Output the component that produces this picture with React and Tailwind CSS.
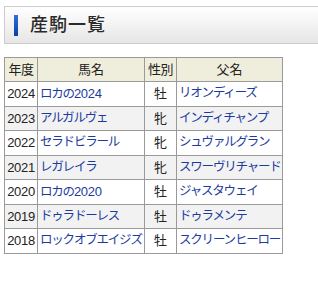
import React from 'react';

const rows = [
  ['2024', 'ロカの2024', '牡', 'リオンディーズ'],
  ['2023', 'アルガルヴェ', '牝', 'インディチャンプ'],
  ['2022', 'セラドビラール', '牝', 'シュヴァルグラン'],
  ['2021', 'レガレイラ', '牝', 'スワーヴリチャード'],
  ['2020', 'ロカの2020', '牡', 'ジャスタウェイ'],
  ['2019', 'ドゥラドーレス', '牡', 'ドゥラメンテ'],
  ['2018', 'ロックオブエイジズ', '牡', 'スクリーンヒーロー'],
];

// kana get tight spacing, digits keep normal spacing
const Name = ({ text }) => {
  const parts = text.split(/(\d+)/).filter(Boolean);
  return parts.map((p, i) =>
    /\d/.test(p)
      ? <span key={i} className="text-[13px] tracking-[-0.3px]">{p}</span>
      : <span key={i}>{p}</span>
  );
};

const App = () => {
  return (
    <div className="w-[318px] h-[281px] bg-white overflow-hidden pt-[6px] pl-[4px] font-['Liberation_Sans','Noto_Sans_CJK_JP',sans-serif]">
      <div className="w-[330px] h-[38px] border border-[#cccccc] bg-gradient-to-b from-white to-[#e6e6e6] flex items-center pl-[9px]">
        <span className="w-[4px] h-[21px] bg-gradient-to-b from-[#2f6fe0] to-[#0a3fa8]" />
        <h2 className="ml-[12px] text-[18px] font-medium text-[#2a2a2a] leading-none tracking-[1px]">産駒一覧</h2>
      </div>

      <table className="mt-[13px] w-[279px] table-fixed border-collapse text-[13px] text-[#222222]">
        <thead>
          <tr className="bg-[#efeddb] h-[24px]">
            <th className="w-[33px] border border-[#9a9a9a] font-normal px-0 tracking-[-0.5px]">年度</th>
            <th className="w-[107px] border border-[#9a9a9a] font-normal">馬名</th>
            <th className="w-[32px] border border-[#9a9a9a] font-normal tracking-[-0.5px]">性別</th>
            <th className="w-[106px] border border-[#9a9a9a] font-normal">父名</th>
          </tr>
        </thead>
        <tbody>
          {rows.map((r, i) => (
            <tr key={r[0]} className={`h-[24.5px] ${i % 2 === 1 ? 'bg-[#f2f2f2]' : 'bg-white'}`}>
              <td className="border border-[#9a9a9a] text-center px-0 tracking-[-0.3px]">{r[0]}</td>
              <td className="border border-[#9a9a9a] pl-[2px] text-[12.5px] tracking-[-1.2px] text-[#1c3b9e] whitespace-nowrap overflow-hidden"><Name text={r[1]} /></td>
              <td className="border border-[#9a9a9a] text-center">{r[2]}</td>
              <td className="border border-[#9a9a9a] pl-[2px] text-[12.5px] tracking-[-1.2px] text-[#1c3b9e] whitespace-nowrap overflow-hidden"><Name text={r[3]} /></td>
            </tr>
          ))}
        </tbody>
      </table>
    </div>
  );
};

export default App;
